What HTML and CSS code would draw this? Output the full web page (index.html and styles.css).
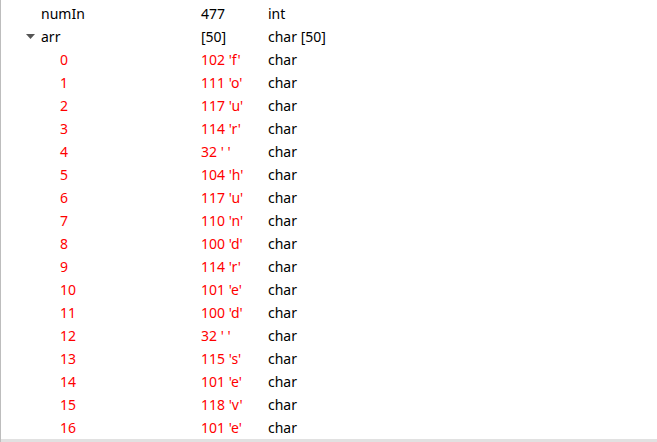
FILE: index.html
```html
<!DOCTYPE html>
<html>
<head>
<meta charset="utf-8">
<link rel="stylesheet" href="styles.css">
</head>
<body>
<div class="view">
  <div class="rows">
    <div class="row"><div class="name lvl0"><span class="arrow-space"></span>numIn</div><div class="val">477</div><div class="type">int</div></div>
    <div class="row"><div class="name lvl0"><span class="arrow-space"><svg class="arrow" width="9" height="5" viewBox="0 0 9 5"><path d="M0 0H9L4.5 5Z" fill="#555"/></svg></span>arr</div><div class="val">[50]</div><div class="type">char [50]</div></div>
    <div class="row chg"><div class="name lvl1">0</div><div class="val">102 'f'</div><div class="type">char</div></div>
    <div class="row chg"><div class="name lvl1">1</div><div class="val">111 'o'</div><div class="type">char</div></div>
    <div class="row chg"><div class="name lvl1">2</div><div class="val">117 'u'</div><div class="type">char</div></div>
    <div class="row chg"><div class="name lvl1">3</div><div class="val">114 'r'</div><div class="type">char</div></div>
    <div class="row chg"><div class="name lvl1">4</div><div class="val">32 ' '</div><div class="type">char</div></div>
    <div class="row chg"><div class="name lvl1">5</div><div class="val">104 'h'</div><div class="type">char</div></div>
    <div class="row chg"><div class="name lvl1">6</div><div class="val">117 'u'</div><div class="type">char</div></div>
    <div class="row chg"><div class="name lvl1">7</div><div class="val">110 'n'</div><div class="type">char</div></div>
    <div class="row chg"><div class="name lvl1">8</div><div class="val">100 'd'</div><div class="type">char</div></div>
    <div class="row chg"><div class="name lvl1">9</div><div class="val">114 'r'</div><div class="type">char</div></div>
    <div class="row chg"><div class="name lvl1">10</div><div class="val">101 'e'</div><div class="type">char</div></div>
    <div class="row chg"><div class="name lvl1">11</div><div class="val">100 'd'</div><div class="type">char</div></div>
    <div class="row chg"><div class="name lvl1">12</div><div class="val">32 ' '</div><div class="type">char</div></div>
    <div class="row chg"><div class="name lvl1">13</div><div class="val">115 's'</div><div class="type">char</div></div>
    <div class="row chg"><div class="name lvl1">14</div><div class="val">101 'e'</div><div class="type">char</div></div>
    <div class="row chg"><div class="name lvl1">15</div><div class="val">118 'v'</div><div class="type">char</div></div>
    <div class="row chg"><div class="name lvl1">16</div><div class="val">101 'e'</div><div class="type">char</div></div>
  </div>
  <div class="hscroll"></div>
</div>
</body>
</html>
```

FILE: styles.css
```css
html, body {
  margin: 0;
  padding: 0;
  background: #ffffff;
}
body {
  width: 657px;
  height: 442px;
  overflow: hidden;
  font-family: "Noto Sans", "DejaVu Sans", sans-serif;
  font-size: 14px;
  color: #000000;
}
.view {
  height: 442px;
  border-left: 1px solid #bdbdbd;
  box-sizing: border-box;
  display: flex;
  flex-direction: column;
}
.rows {
  flex: 1;
  overflow: hidden;
  padding-top: 2px;
}
.row {
  display: grid;
  grid-template-columns: 200px 67px 1fr;
  height: 23px;
  align-items: center;
  line-height: 23px;
  white-space: pre;
}
.chg .name, .chg .val {
  color: #ff0000;
}
.name {
  display: flex;
  align-items: center;
}
.lvl0 {
  padding-left: 24px;
}
.lvl1 {
  padding-left: 59px;
}
.arrow-space {
  width: 16px;
  display: inline-flex;
  align-items: center;
}
.arrow {
  display: block;
  margin-left: 1px;
}
.hscroll {
  height: 3px;
  background: #e1e1e1;
  flex: none;
}
```
